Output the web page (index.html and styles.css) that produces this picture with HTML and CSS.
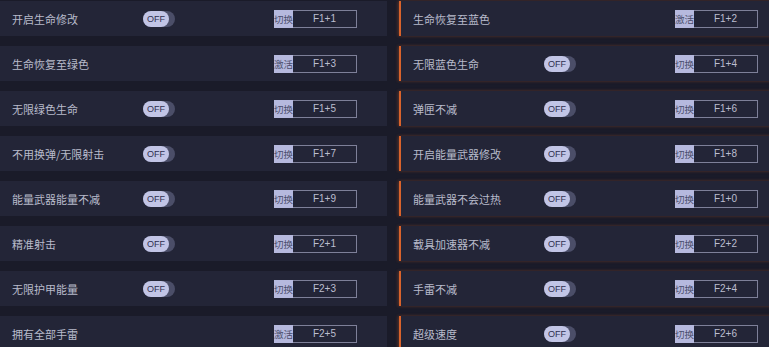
FILE: index.html
```html
<!DOCTYPE html>
<html lang="zh-CN">
<head>
    <meta charset="UTF-8">
    <meta name="viewport" content="width=device-width, initial-scale=1.0">
    <title>修改器</title>
    <link rel="stylesheet" href="styles.css">
</head>
<body>

    <div class="cheat-grid">
        <!-- row 1 -->
        <div class="cheat-row">
            <span class="cheat-name">开启生命修改</span>
            <span class="toggle"><span class="knob">OFF</span></span>
            <span class="hotkey"><span class="hk-mode">切换</span><span class="hk-key">F1+1</span></span>
        </div>
        <div class="cheat-row right">
            <span class="cheat-name">生命恢复至蓝色</span>
            <span class="no-toggle"></span>
            <span class="hotkey"><span class="hk-mode">激活</span><span class="hk-key">F1+2</span></span>
        </div>

        <!-- row 2 -->
        <div class="cheat-row">
            <span class="cheat-name">生命恢复至绿色</span>
            <span class="no-toggle"></span>
            <span class="hotkey"><span class="hk-mode">激活</span><span class="hk-key">F1+3</span></span>
        </div>
        <div class="cheat-row right">
            <span class="cheat-name">无限蓝色生命</span>
            <span class="toggle"><span class="knob">OFF</span></span>
            <span class="hotkey"><span class="hk-mode">切换</span><span class="hk-key">F1+4</span></span>
        </div>

        <!-- row 3 -->
        <div class="cheat-row">
            <span class="cheat-name">无限绿色生命</span>
            <span class="toggle"><span class="knob">OFF</span></span>
            <span class="hotkey"><span class="hk-mode">切换</span><span class="hk-key">F1+5</span></span>
        </div>
        <div class="cheat-row right">
            <span class="cheat-name">弹匣不减</span>
            <span class="toggle"><span class="knob">OFF</span></span>
            <span class="hotkey"><span class="hk-mode">切换</span><span class="hk-key">F1+6</span></span>
        </div>

        <!-- row 4 -->
        <div class="cheat-row">
            <span class="cheat-name">不用换弹/无限射击</span>
            <span class="toggle"><span class="knob">OFF</span></span>
            <span class="hotkey"><span class="hk-mode">切换</span><span class="hk-key">F1+7</span></span>
        </div>
        <div class="cheat-row right">
            <span class="cheat-name">开启能量武器修改</span>
            <span class="toggle"><span class="knob">OFF</span></span>
            <span class="hotkey"><span class="hk-mode">切换</span><span class="hk-key">F1+8</span></span>
        </div>

        <!-- row 5 -->
        <div class="cheat-row">
            <span class="cheat-name">能量武器能量不减</span>
            <span class="toggle"><span class="knob">OFF</span></span>
            <span class="hotkey"><span class="hk-mode">切换</span><span class="hk-key">F1+9</span></span>
        </div>
        <div class="cheat-row right">
            <span class="cheat-name">能量武器不会过热</span>
            <span class="toggle"><span class="knob">OFF</span></span>
            <span class="hotkey"><span class="hk-mode">切换</span><span class="hk-key">F1+0</span></span>
        </div>

        <!-- row 6 -->
        <div class="cheat-row">
            <span class="cheat-name">精准射击</span>
            <span class="toggle"><span class="knob">OFF</span></span>
            <span class="hotkey"><span class="hk-mode">切换</span><span class="hk-key">F2+1</span></span>
        </div>
        <div class="cheat-row right">
            <span class="cheat-name">载具加速器不减</span>
            <span class="toggle"><span class="knob">OFF</span></span>
            <span class="hotkey"><span class="hk-mode">切换</span><span class="hk-key">F2+2</span></span>
        </div>

        <!-- row 7 -->
        <div class="cheat-row">
            <span class="cheat-name">无限护甲能量</span>
            <span class="toggle"><span class="knob">OFF</span></span>
            <span class="hotkey"><span class="hk-mode">切换</span><span class="hk-key">F2+3</span></span>
        </div>
        <div class="cheat-row right">
            <span class="cheat-name">手雷不减</span>
            <span class="toggle"><span class="knob">OFF</span></span>
            <span class="hotkey"><span class="hk-mode">切换</span><span class="hk-key">F2+4</span></span>
        </div>

        <!-- row 8 -->
        <div class="cheat-row">
            <span class="cheat-name">拥有全部手雷</span>
            <span class="no-toggle"></span>
            <span class="hotkey"><span class="hk-mode">激活</span><span class="hk-key">F2+5</span></span>
        </div>
        <div class="cheat-row right">
            <span class="cheat-name">超级速度</span>
            <span class="toggle"><span class="knob">OFF</span></span>
            <span class="hotkey"><span class="hk-mode">切换</span><span class="hk-key">F2+6</span></span>
        </div>
    </div>

</body>
</html>
```

FILE: styles.css
```css
body {
    margin: 0;
    background-color: #1a1b29;
    font-family: "Noto Sans CJK SC", "Noto Sans", sans-serif;
    overflow: hidden;
}
.cheat-grid {
    display: grid;
    grid-template-columns: 387px 390px;
    grid-auto-rows: 35px;
    column-gap: 12px;
    row-gap: 10px;
    padding-top: 1px;
    width: 789px;
}
.cheat-row {
    display: grid;
    grid-template-columns: 131px 131px 83px;
    align-items: center;
    padding-left: 12px;
    background-color: #232537;
}
.cheat-row.right {
    border-left: 2px solid #d9632c;
    box-shadow: -1px 0 3px rgba(217, 99, 44, 0.35);
}
.cheat-name {
    font-size: 11px;
    color: #b8bbcb;
    white-space: nowrap;
}
.toggle {
    display: flex;
    width: 32px;
    height: 16px;
    border-radius: 8px;
    background-color: #4b4e68;
}
.knob {
    width: 26px;
    height: 16px;
    border-radius: 8px;
    background-color: #c2c5e6;
    color: #2e3050;
    font-family: "Liberation Sans", Arial, sans-serif;
    font-size: 9px;
    line-height: 16px;
    text-align: center;
}
.hotkey {
    display: flex;
    height: 18px;
}
.hk-mode {
    width: 19px;
    background-color: #b6b9de;
    color: #4a4d6c;
    font-size: 9.5px;
    line-height: 18px;
    white-space: nowrap;
    overflow: hidden;
}
.hk-key {
    flex: 1;
    border: 1px solid #7e8099;
    border-left: none;
    color: #bcbed0;
    font-family: "Liberation Sans", Arial, sans-serif;
    font-size: 10px;
    line-height: 16px;
    text-align: center;
}
```
